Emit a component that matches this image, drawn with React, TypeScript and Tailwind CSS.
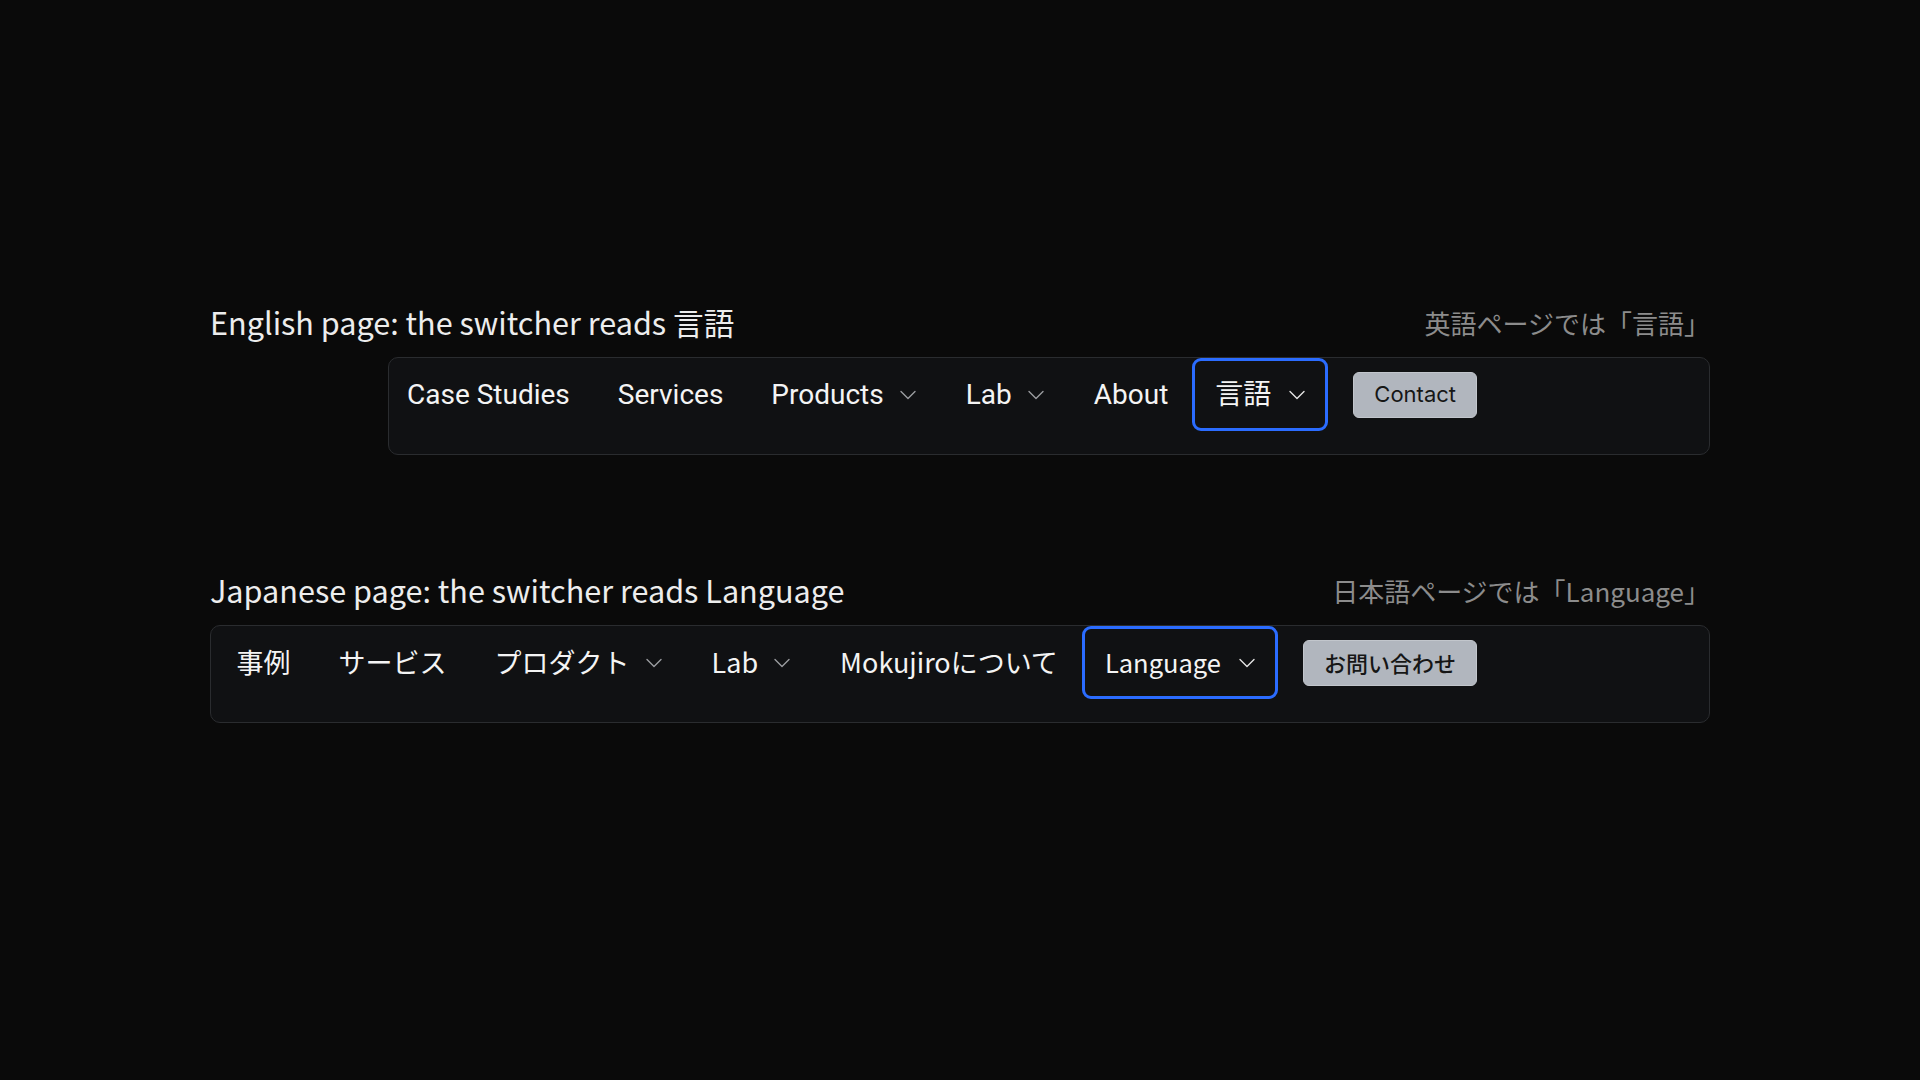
import { ChevronDown } from 'lucide-react'

// Two nav bars side by side in the doc: the language switcher shows the
// *other* language's label, so English pages read 言語 and Japanese pages
// read Language.

type NavItem = { label: string; menu?: boolean }

const enItems: NavItem[] = [
  { label: 'Case Studies' },
  { label: 'Services' },
  { label: 'Products', menu: true },
  { label: 'Lab', menu: true },
  { label: 'About' },
]

const jaItems: NavItem[] = [
  { label: '事例' },
  { label: 'サービス' },
  { label: 'プロダクト', menu: true },
  { label: 'Lab', menu: true },
  { label: 'Mokujiroについて' },
]

function NavLink({ item }: { item: NavItem }) {
  return (
    <a
      href="#"
      className={
        item.menu
          ? 'flex h-[73px] shrink-0 items-center whitespace-nowrap pl-6 pr-5 text-[#f4f4f4]'
          : 'flex h-[73px] shrink-0 items-center whitespace-nowrap px-6 text-[#f4f4f4]'
      }
    >
      {item.label}
      {item.menu && <ChevronDown size={28} strokeWidth={1.2} className="ml-2.5 text-[#9a9ca0]" />}
    </a>
  )
}

function NavBar({
  items,
  switcher,
  switcherText = '',
  contact,
  font,
  contactFont,
  className = '',
}: {
  items: NavItem[]
  switcher: string
  switcherText?: string
  contact: string
  font: string
  contactFont: string
  className?: string
}) {
  return (
    <nav
      className={`flex h-[98px] items-start justify-end rounded-[10px] border border-[#2a2c2f] bg-[#101113] pr-[232px] ${font} ${className}`}
    >
      {items.map((item) => (
        <NavLink key={item.label} item={item} />
      ))}
      <button className="flex h-[73px] shrink-0 items-center whitespace-nowrap rounded-[9px] border-[3px] border-[#2b6cff] pl-5 pr-[14px] text-[#f4f4f4]">
        <span className={switcherText}>{switcher}</span>
        <ChevronDown size={28} strokeWidth={1.2} className="ml-3 text-[#e4e4e4]" />
      </button>
      <div className="flex h-[73px] shrink-0 items-center pl-[25px]">
        <button
          className={`h-[46px] whitespace-nowrap rounded-[6px] border border-[#c2c6cc] bg-[#b1b6be] px-5 text-[22px] text-[#161616] ${contactFont}`}
        >
          {contact}
        </button>
      </div>
    </nav>
  )
}

function Caption({ title, note }: { title: string; note: string }) {
  return (
    <div className="mb-3 flex items-center justify-between font-['Noto_Sans_CJK_JP',sans-serif] leading-[45px]">
      <h2 className="text-[30.6px] text-[#ededed]">{title}</h2>
      <span className="text-[26px] text-[#8c8c8c]">{note}</span>
    </div>
  )
}

export default function App() {
  return (
    <div className="min-h-screen bg-[#0a0a0a] pt-[300px]">
      <div className="mx-auto w-[1500px]">
        <Caption title="English page: the switcher reads 言語" note="英語ページでは「言語」" />
        <NavBar
          items={enItems}
          switcher="言語"
          contact="Contact"
          font="font-['Roboto','Noto_Sans_CJK_JP',sans-serif] text-[28px]"
          contactFont="font-['Inter',sans-serif]"
          className="ml-[178px]"
        />

        <div className="mt-[113px]">
          <Caption title="Japanese page: the switcher reads Language" note="日本語ページでは「Language」" />
          <NavBar
            items={jaItems}
            switcher="Language"
            switcherText="text-[25.5px]"
            contact="お問い合わせ"
            font="font-['Noto_Sans_CJK_JP',sans-serif] text-[27px]"
            contactFont="font-medium"
          />
        </div>
      </div>
    </div>
  )
}
